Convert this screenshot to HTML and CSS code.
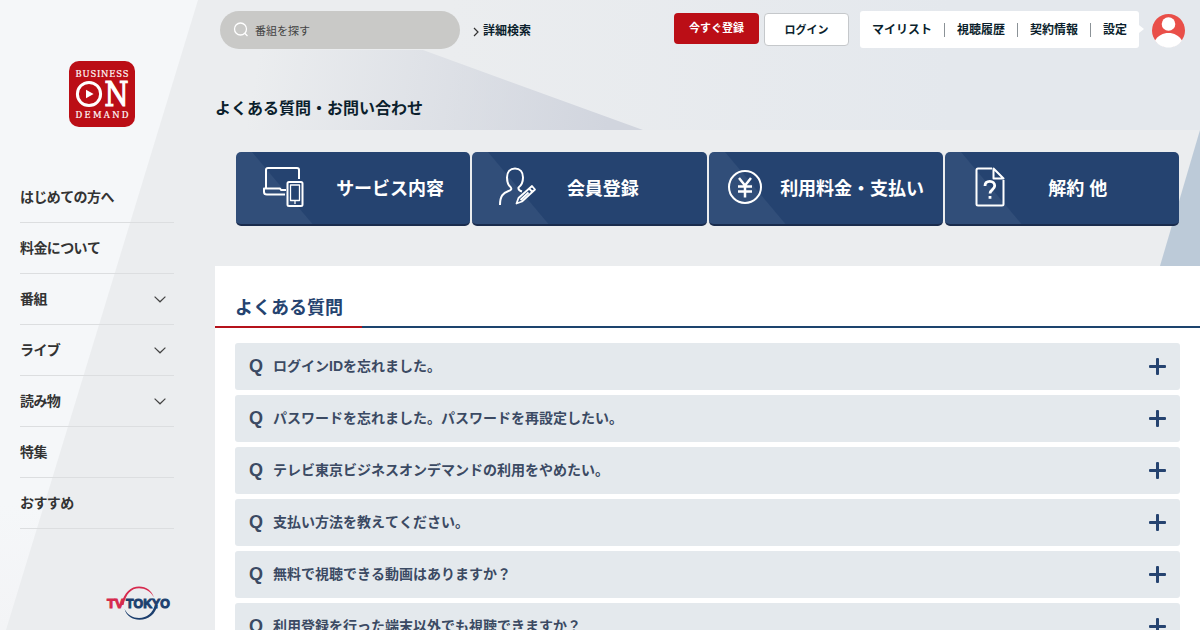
FILE: index.html
```html
<!DOCTYPE html>
<html lang="ja">
<head>
    <meta charset="UTF-8">
    <meta name="viewport" content="width=device-width, initial-scale=1.0">
    <title>よくある質問・お問い合わせ</title>
    <link rel="stylesheet" href="styles.css">
</head>
<body>
    <div class="wrapper">
        <aside class="sidebar">
            <a class="logo">
                <svg width="66" height="66" viewBox="0 0 66 66">
                    <rect width="66" height="66" rx="10" fill="#bb0e16"/>
                    <g class="logo-text">
                        <text x="6.5" y="15.8" textLength="53" lengthAdjust="spacing">BUSINESS</text>
                        <text class="logo-n" x="35.5" y="45.3" textLength="24" lengthAdjust="spacingAndGlyphs">N</text>
                        <text x="6.5" y="56.8" textLength="53" lengthAdjust="spacing">DEMAND</text>
                    </g>
                    <circle cx="20" cy="33" r="11.6" fill="none" stroke="#fff" stroke-width="3"/>
                    <path d="M17 28.8v8.4l7.6-4.2z" fill="#fff"/>
                </svg>
            </a>
            <ul class="menu">
                <li>はじめての方へ</li>
                <li>料金について</li>
                <li>番組<svg class="arrow" width="12" height="7" viewBox="0 0 12 7"><path d="M.6.6 6 5.8 11.4.6"/></svg></li>
                <li>ライブ<svg class="arrow" width="12" height="7" viewBox="0 0 12 7"><path d="M.6.6 6 5.8 11.4.6"/></svg></li>
                <li>読み物<svg class="arrow" width="12" height="7" viewBox="0 0 12 7"><path d="M.6.6 6 5.8 11.4.6"/></svg></li>
                <li>特集</li>
                <li>おすすめ</li>
            </ul>
            <a class="tvtokyo">
                <svg width="66" height="36" viewBox="0 0 66 36">
                    <path d="M15 20C18 7 25 1.500 33 1.500c7.500 0 13 4.500 15 11C44.500 6 39 3.300 33 3.300 25 3.300 20 9 17.500 20z" fill="#d62a4e"/>
                    <path d="M18.500 24c3 6 8.500 9 14.500 9C41 33 46.500 28 49 20l2.500 0c-2 9-9 14.800-18 14.800C26.500 34.800 20.500 31 18.500 24z" fill="#1c3f6e"/>
                    <g class="tv-text">
                        <text x="1" y="22.5" textLength="17" lengthAdjust="spacingAndGlyphs" fill="#d62a4e" stroke="#d62a4e">TV</text>
                        <text x="20" y="22.5" textLength="44" lengthAdjust="spacingAndGlyphs" fill="#1c3f6e" stroke="#1c3f6e">TOKYO</text>
                    </g>
                </svg>
            </a>
        </aside>

        <div class="main">
            <header class="header">
                <div class="search">
                    <svg width="16" height="16" viewBox="0 0 16 16" fill="none" stroke="#fff" stroke-width="1.3"><circle cx="7.5" cy="7" r="6"/><path d="M11.800 11.300 14.500 14"/></svg>
                    <span>番組を探す</span>
                </div>
                <a class="detail">
                    <svg width="6" height="10" viewBox="0 0 6 10"><path d="M1 1l4 4-4 4"/></svg>
                    <span>詳細検索</span>
                </a>
                <a class="btn btn-entry">今すぐ登録</a>
                <a class="btn btn-login">ログイン</a>
                <ul class="user-menu">
                    <li>マイリスト</li>
                    <li>視聴履歴</li>
                    <li>契約情報</li>
                    <li>設定</li>
                </ul>
                <svg class="avatar" width="33" height="34" viewBox="0 0 33 34">
                    <circle cx="16.5" cy="16.5" r="16.5" fill="#e94f49"/>
                    <circle cx="16.5" cy="10" r="6.8" fill="#fff"/>
                    <path d="M3 26.500C6 21.500 11 19 16.500 19S27 21.500 30 26.500C27 31 22 33.500 16.500 33.500S6 31 3 26.500z" fill="#fff"/>
                </svg>
            </header>

            <h1 class="page-title">よくある質問・お問い合わせ</h1>

            <ul class="category">
                <li>
                    <span class="icon icon-service">
                        <svg width="42" height="42" viewBox="0 0 42 42">
                            <path d="M4 22V4q0-2 2-2h29q2 0 2 2v9M24 24h-5l-1-1.500H2V26q0 2.500 3 2.500H23"/>
                            <rect x="25.5" y="16" width="15" height="24" rx="1.5"/>
                            <path d="M28.500 19h9v15.500h-9zM33 35v3" stroke-width="1.3"/>
                        </svg>
                    </span>
                    <span class="label">サービス内容</span>
                </li>
                <li>
                    <span class="icon icon-member">
                        <svg width="42" height="42" viewBox="0 0 42 42">
                            <path d="M3 39c0-9 3-12 8.500-14 3-1 3.500-2 2-4C11 19 10 16 10 11.500 10 6 13 2.500 18 2.500s8 3.500 8 9c0 4.500-1 7.500-4.500 10-.5 2 .5 3 3.500 4"/>
                            <path d="M19.500 37.500l2-5.500L35 20l3 3.500-13 12zM32 22.500l3.500 3.500M23.500 34l8-7.500" stroke-width="1.8"/>
                        </svg>
                    </span>
                    <span class="label">会員登録</span>
                </li>
                <li>
                    <span class="icon icon-price">
                        <svg width="42" height="42" viewBox="0 0 42 42">
                            <circle cx="21" cy="21" r="16"/>
                            <path d="M15 12l6 7.500 6-7.500M21 19.500V31.500M14 20.500h14M14 25.500h14" stroke-width="2.5"/>
                        </svg>
                    </span>
                    <span class="label">利用料金・支払い</span>
                </li>
                <li>
                    <span class="icon icon-cancel">
                        <svg width="42" height="42" viewBox="0 0 42 42">
                            <path d="M23 2.500H9Q7.500 2.500 7.500 4v34q0 1.500 1.500 1.500h24q1.500 0 1.500-1.500V14M24.500 2.500v10h10z"/>
                            <path d="M16 20c0-3 2-4.700 4.800-4.700s4.900 1.700 4.900 4.500c0 3.700-4.700 3.900-4.700 7.700M21 30v2.700" stroke-width="2.8"/>
                        </svg>
                    </span>
                    <span class="label">解約 他</span>
                </li>
            </ul>

            <section class="faq">
                <h2 class="faq-title">よくある質問</h2>
                <ul class="faq-list">
                    <li><b>Q</b><span>ログインIDを忘れました。</span><i class="plus"></i></li>
                    <li><b>Q</b><span>パスワードを忘れました。パスワードを再設定したい。</span><i class="plus"></i></li>
                    <li><b>Q</b><span>テレビ東京ビジネスオンデマンドの利用をやめたい。</span><i class="plus"></i></li>
                    <li><b>Q</b><span>支払い方法を教えてください。</span><i class="plus"></i></li>
                    <li><b>Q</b><span>無料で視聴できる動画はありますか？</span><i class="plus"></i></li>
                    <li><b>Q</b><span>利用登録を行った端末以外でも視聴できますか？</span><i class="plus"></i></li>
                </ul>
            </section>
        </div>
    </div>
</body>
</html>
```
FILE: styles.css
```css
* {
    box-sizing: border-box;
}

body {
    margin: 0;
    font-family: "Liberation Sans", "Noto Sans CJK JP", sans-serif;
    font-weight: bold;
    font-kerning: none;
    color: #0b1f2d;
}

ul, h1, h2 {
    list-style: none;
    margin: 0;
    padding: 0;
}

svg {
    display: block;
    flex-shrink: 0;
}

.wrapper {
    position: relative;
    display: flex;
    height: 630px;
    overflow: hidden;
    background: #ebedef;
}

/* background shapes */
.wrapper::before, .wrapper::after {
    content: "";
    position: absolute;
    top: 0;
    left: 0;
    width: 1200px;
}

.wrapper::before {
    height: 130px;
    background: linear-gradient(90deg, rgba(228, 232, 237, 0) 450px, #e4e8ed 950px);
}

.wrapper::after {
    top: 130px;
    left: 1160px;
    width: 40px;
    height: 136px;
    background: #bccad8;
    clip-path: polygon(100% 0, 100% 100%, 0 100%);
}

/* sidebar */
.sidebar {
    position: relative;
    display: flex;
    flex-direction: column;
    width: 215px;
    height: 630px;
    padding: 61px 41px 9px 20px;
}

.sidebar::before {
    content: "";
    position: absolute;
    top: 0;
    left: 0;
    width: 198px;
    height: 630px;
    background: linear-gradient(#f5f7f9 80%, #f3f4f6);
    clip-path: polygon(0 0, 100% 0, 6px 100%, 0 100%);
}

.sidebar > * {
    position: relative;
}

.logo {
    margin-left: 49px;
}

.logo-text {
    font-family: "DejaVu Serif Condensed", "DejaVu Serif", serif;
    font-size: 9.3px;
    font-weight: normal;
    fill: #fff;
    stroke: #fff;
    stroke-width: .2px;
}

.logo-n {
    font-size: 33px;
    stroke-width: 1.2px;
}

.menu {
    margin-top: 45px;
}

.menu li {
    display: flex;
    align-items: center;
    justify-content: space-between;
    height: 51px;
    padding: 0 8px 2px 0;
    border-bottom: 1px solid #dcdee0;
    font-size: 14px;
    letter-spacing: -0.6px;
    color: #333;
}

.arrow {
    margin-top: 2px;
    fill: none;
    stroke: #444;
    stroke-width: 1.2;
}

.tvtokyo {
    margin: auto 0 0 86px;
}

.tv-text {
    font-size: 12.5px;
    stroke-width: 1px;
}

/* header */
.main {
    position: relative;
    z-index: 1;
    width: 985px;
}

.main::before {
    content: "";
    position: absolute;
    top: 50px;
    left: 0;
    width: 428px;
    height: 80px;
    z-index: -1;
    background: linear-gradient(100deg, rgba(209, 213, 222, 0) 10%, #d1d5de 92%);
    clip-path: polygon(0 0, 208px 0, 100% 100%, 0 100%);
}

.header {
    display: flex;
    align-items: flex-start;
    height: 60px;
    padding: 11px 15px 0 5px;
}

.search {
    display: flex;
    align-items: center;
    width: 240px;
    height: 38px;
    padding-left: 13px;
    border-radius: 19px;
    background: #c9c9c7;
    color: #444;
    font-size: 11px;
    font-weight: normal;
}

.search span {
    margin-left: 6px;
}

.detail {
    display: flex;
    align-items: center;
    gap: 4px;
    height: 38px;
    margin-left: 13px;
    font-size: 12px;
}

.detail svg {
    margin-top: 3px;
    fill: none;
    stroke: #333;
    stroke-width: 1.2;
}

.detail span {
    padding-bottom: 2px;
}

.btn {
    width: 85px;
    margin-top: 2px;
    border-radius: 4px;
    text-align: center;
    font-size: 11px;
}

.btn-entry {
    height: 31px;
    margin-left: auto;
    background: #bb0e16;
    color: #fff;
    line-height: 31px;
}

.btn-login {
    height: 33px;
    margin-left: 5px;
    border: 1px solid #c5c8cb;
    background: #fff;
    line-height: 32px;
}

.user-menu {
    position: relative;
    display: flex;
    align-items: center;
    width: 279px;
    height: 37px;
    margin-left: 11px;
    border-radius: 3px;
    background: #fff;
    font-size: 12px;
}

.user-menu::after {
    content: "";
    position: absolute;
    top: 14px;
    left: 100%;
    border: 4px solid transparent;
    border-left: 5px solid #fff;
    border-right: 0;
}

.user-menu li {
    padding: 0 12px;
    line-height: 14px;
    white-space: nowrap;
}

.user-menu li + li {
    border-left: 1px solid #8b9297;
}

.avatar {
    margin: 3px 0 0 13px;
}

.page-title {
    height: 92px;
    padding-top: 37px;
    font-size: 16px;
    line-height: 24px;
}

/* category buttons */
.category {
    display: grid;
    grid-template-columns: repeat(4, 1fr);
    gap: 2px;
    padding: 0 21px;
}

.category li {
    display: flex;
    align-items: center;
    height: 74px;
    padding-bottom: 2px;
    border-bottom: 2px solid #1a2c4d;
    border-radius: 5px;
    background: linear-gradient(50deg, #314e79 58px, #254370 59px);
    color: #fff;
    font-size: 18px;
}

.icon svg {
    fill: none;
    stroke: #fff;
    stroke-width: 2;
    stroke-linejoin: round;
}

.icon-service {
    margin-left: 26px;
}

.icon-member {
    margin-left: 25px;
}

.icon-price {
    margin-left: 15px;
}

.icon-cancel {
    margin-left: 24px;
}

.label {
    flex: 1;
    padding-right: 10px;
    text-align: center;
    white-space: nowrap;
}

.icon-service + .label {
    padding: 0 0 0 6px;
}

.icon-member + .label {
    padding-right: 40px;
}

.icon-price + .label {
    padding-right: 4px;
}

.icon-cancel + .label {
    padding-right: 34px;
}

/* faq */
.faq {
    height: 400px;
    margin-top: 40px;
    background: #fff;
}

.faq-title {
    height: 62px;
    padding: 29px 20px 0;
    border-bottom: 2px solid;
    border-image: linear-gradient(90deg, #b5121b 15%, #1d446e 15%) 1;
    font-size: 18px;
    line-height: 26px;
    color: #254370;
}

.faq-list {
    padding: 15px 20px 0;
}

.faq-list li {
    display: flex;
    align-items: center;
    height: 47px;
    margin-bottom: 5px;
    padding: 0 14px;
    border-radius: 3px;
    background: #e4e9ed;
    color: #3b4a63;
    font-size: 14px;
}

.faq-list b {
    width: 24px;
    font-size: 18px;
}

.faq-list span {
    padding-bottom: 3px;
}

.plus {
    display: grid;
    place-items: center;
    width: 17px;
    height: 17px;
    margin: 0 0 1px auto;
}

.plus::before, .plus::after {
    content: "";
    grid-area: 1 / 1;
    width: 17px;
    height: 3px;
    border-radius: 1px;
    background: #254370;
}

.plus::after {
    width: 3px;
    height: 17px;
}
```
